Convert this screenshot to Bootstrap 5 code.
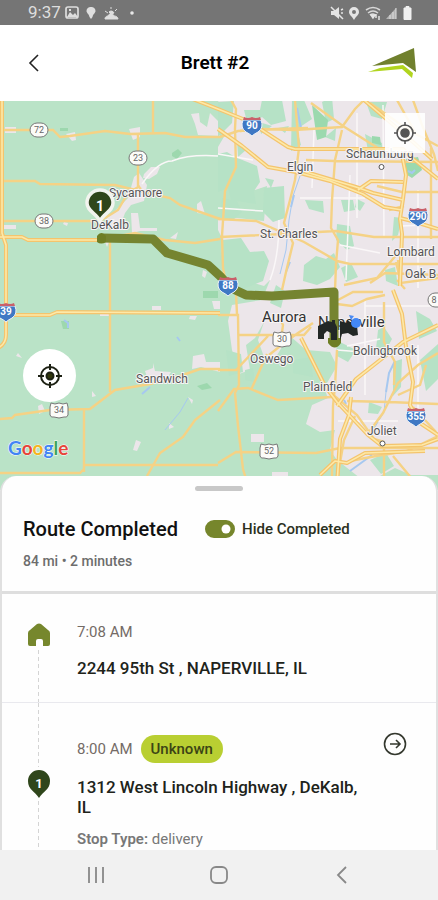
<!DOCTYPE html>
<html lang="en">
<head>
<meta charset="utf-8">
<meta name="viewport" content="width=device-width, initial-scale=1">
<title>Brett #2</title>
<link href="https://cdn.jsdelivr.net/npm/bootstrap@5.3.0/dist/css/bootstrap.min.css" rel="stylesheet">
<style>
  body { font-family: Roboto, "Liberation Sans", sans-serif; color: #111; background: #fdfdfd; }
  .screen { height: 100vh; min-height: 600px; }
  .status-bar { background: #757575; color: #dedede; height: 25px; font-size: 17px; line-height: 25px; }
  .top-bar { height: 76px; background: #fff; }
  .side-slot { width: 72px; }
  .side-slot.logo-slot { width: 80px; }
  .screen-title { font-size: 19px; line-height: 24px; font-weight: 600; color: #000; }
  .icon-btn { border: 0; background: none; padding: 0; display: flex; align-items: center; justify-content: center; }
  .map-area { height: 389px; background: #bae3c7; }
  .locate-square { position: absolute; top: 12px; right: 13px; width: 40px; height: 40px; background: #ffffffe6; }
  .locate-round { position: absolute; left: 23px; top: 248px; width: 53px; height: 53px; background: #fff; border-radius: 50%; }
  .sheet { margin-top: -14px; z-index: 2; background: #fefefe; border: 2px solid #e0e0e0; border-top: 0; border-bottom: 0; border-radius: 16px 16px 0 0; }
  .handle { width: 48px; height: 5px; border-radius: 3px; background: #c8c8c8; margin-top: 10px; }
  .sheet-head { padding: 22px 22px 20px 21px; border-bottom: 3px solid #dedede; }
  .route-title { font-size: 20px; line-height: 32px; font-weight: 500; width: 182px; }
  .route-meta { font-size: 14px; line-height: 20px; color: #6d6d6d; font-weight: 500; margin-top: 6px; }
  .hide-switch .form-check-input { width: 30px; height: 18px; margin: 0 7px 0 0; border: 3px solid #76862c; float: none; box-shadow: none; }
  .hide-switch .form-check-input:checked { background-color: #76862c; border-color: #76862c; }
  .hide-switch label { font-size: 15px; line-height: 20px; font-weight: 500; color: #2b301d; }
  .stop { border-bottom: 1px solid #e9e9ee; }
  .stop-rail { width: 75px; padding-left: 24px; background: linear-gradient(#d4d4d4 60%, transparent 0) 36px 0 / 1px 7px repeat-y; }
  .rail-mask { background: #fefefe; width: 26px; }
  .stop-time { font-size: 15px; line-height: 20px; color: #746b66; }
  .stop-address { font-size: 17px; line-height: 20px; font-weight: 500; color: #20231a; }
  .stop-details .stop-address { padding-top: 14px; padding-right: 12px; }
  .status-pill { background: #b9cf32; color: #3c4415; font-size: 15px; font-weight: 500; line-height: 20px; padding: 4px 10px; border-radius: 14px; }
  .stop-kind { font-size: 15px; line-height: 20px; color: #777; }
  .sys-nav { height: 50px; background: #f1f1f1; z-index: 3; padding: 0 72px; }
  .sys-nav button { width: 48px; height: 48px; }
  .map-label { font-size: 12px; fill: #555; stroke: #f7f4f5; stroke-width: 2px; paint-order: stroke; }
  .map-city { font-size: 15px; fill: #333; }
  .shield-text { font-size: 9px; text-anchor: middle; fill: #666; }
  .interstate-text { font-size: 10px; font-weight: 700; text-anchor: middle; fill: #fff; }
  .google-word { font-family: Lato, Roboto, sans-serif; font-size: 19px; font-weight: 700; stroke: #fff; stroke-width: 1px; paint-order: stroke; }
</style>
<script src="https://cdn.jsdelivr.net/npm/bootstrap@5.3.0/dist/js/bootstrap.bundle.min.js"></script>
</head>
<body>
<div class="screen d-flex flex-column overflow-hidden">
  <div class="status-bar d-flex align-items-center flex-shrink-0">
    <span class="ps-4 ms-1">9:37</span>
    <svg class="ms-1" width="75" height="18" viewBox="0 0 75 18" aria-hidden="true">
      <rect x="1" y="3" width="12" height="11" rx="2" fill="none" stroke="#dedede" stroke-width="1.7"/><path d="M2 13 5 8l3 3 2-2 3 4zM4 5h2v2H4z" fill="#dedede"/>
      <path d="M26 3a4 4 0 0 1 4.500 4c0 2-2.500 3-3 6l-1.500 2-1.500-2c-.5-3-3-4-3-6A4 4 0 0 1 26 3z" fill="#dedede"/>
      <path d="M40 15c0-3 3-3 3-3 1-3 5-3 6 0 4 0 4 3 4 3zM44 8a3 3 0 0 1 5 1l-3 1zM40 7l3 2M46 3v2M52 5l-2 2" fill="#dedede" stroke="#dedede"/>
      <circle cx="67" cy="9" r="1.800" fill="#e8e8e8"/>
    </svg>
    <svg class="ms-auto me-4" width="84" height="18" viewBox="0 0 84 18" aria-hidden="true">
      <path d="M1 7h3l5-4v12l-5-4H1z" fill="#e4e4e4"/><path d="M1 3l12 12M11 6l2-1M11 9h2" stroke="#e4e4e4" stroke-width="1.500"/>
      <path d="M24 3a5 5 0 0 1 5 5c0 3-3 4-5 8-2-4-5-5-5-8a5 5 0 0 1 5-5zm0 3a2 2 0 1 0 0 4 2 2 0 0 0 0-4z" fill="#e4e4e4" fill-rule="evenodd"/>
      <path d="M36 6q7-5 14 0M38 9q5-4 10 0M40 11q3-2 5 0" fill="none" stroke="#d8d8d8" stroke-width="1.600"/><path d="M43 14l-2-3h4zM46 10v4M49 12v4" stroke="#e4e4e4" stroke-width="1.500" fill="#e4e4e4"/>
      <path d="M56 15 66 4v11z" fill="#b4b4b4"/><path d="M60 15v-4M63 15V8M66 15V4" stroke="#ddd"/>
      <path d="M74 4h2V2.500h3V4h2v11.500h-7z" fill="#f0f0f0" stroke="#f0f0f0"/>
    </svg>
  </div>

  <header class="top-bar d-flex align-items-center justify-content-between flex-shrink-0 px-3">
    <div class="side-slot"><button class="icon-btn" type="button" aria-label="Back">
      <svg width="36" height="36" viewBox="0 0 36 36" fill="none" stroke="#222" stroke-width="1.600"><path d="M22 10l-8 8 8 8"/></svg>
    </button></div>
    <h1 class="screen-title m-0">Brett #2</h1>
    <div class="side-slot logo-slot d-flex justify-content-end">
      <svg width="58" height="38" viewBox="364 44 58 38" aria-hidden="true"><path d="M372 66 414 48l2 24-13-9z" fill="#70802d"/><path d="M367 72 378 67l25-3 13 9-3 6-12-10z" fill="#fff"/><path d="M368 72 380 68l23-3 10 8-1 5-10-9z" fill="#b1d51e"/></svg>
    </div>
  </header>

  <section class="map-area position-relative flex-shrink-0" aria-label="Route map">
    <svg class="d-block" width="100%" height="389" viewBox="0 101 438 389" preserveAspectRatio="xMidYMin slice">
      <defs>
        <g id="interstate"><path d="M-9-5q-3 8 3 12 4 2 6 4 2-2 6-4 6-4 3-12z" fill="#3f78c4" stroke="#edf2f8"/><path d="M-8-8q4 2 8 0 4 2 8 0l1 3h-18z" fill="#c9606a"/></g>
        <rect id="state" x="-9" y="-7" width="18" height="14" rx="7" fill="#fbfbf8" stroke="#777"/>
        <path id="us" d="M-8-7l4 1 4-1 4 1 4-1 1 4v8q-1 3-4 2l-5 1-5-1q-3 1-4-2v-8z" fill="#fbfbf8" stroke="#777"/>
      </defs>
      <rect y="100" width="438" height="390" fill="#bae3c7"/>
      <!-- built-up areas -->
      <g fill="#ece6ea">
        <path d="M218 100H438V475H432L411 475 395 468 380 476 360 478 337 460 330 450 335 430 320 432 306 424 312 405 328 398 324 388 337 366 330 352 306 350 289 335 276 357 264 357 258 340 264 322 255 338 246 345 250 370 239 374 232 350 228 321 232 305 262 300 270 280 264 286 244 280 221 253 223 240 218 230 218 219 237 218 264 221 267 186 255 190 239 186 218 188 218 147 225 135z"/>
        <path d="M191 114l8-1 1 9 7 5 3-14 8 8 2 15-22-1-3-11zM5 127h11v6H5zM66 134l9-2 1 8-4 1zM129 129l11-2v10l-7 3zM144 174l7-7h9l-3 7-8 5-6-1zM134 177l5-4 8 12-3 16-13 4-6 8-5 14-7 3-7-11 10-9 12-12zM4 225h12v4H4zM131 213h7l2 15h17v3h-17l-8 2zM64 222l4 1-1 3-4-2zM170 238l8-6-2 7zM197 204l4-3 4 13-8-1zM203 270l4 2-2 6-3-2zM105 242h4l-2 5zM18 353l4 5-6-2zM38 406l4-2 3 7-6 3zM92 391l4 5-4 1zM136 440l5 2-4 9-4-1zM153 363l2 8 16 1-5 8h-18l-3-9 8-3zM193 356l11-2 2 8h14v10l-19-5-9 2zM188 397l5 3-1 4zM169 423l5 4-5 2zM152 306h9v4h-9zM190 316h7l-2 4-6-1zM212 301h8v8h-6zM100 312h9v4h-9zM251 434h13v8h-13zM272 472h16v6h-16z"/>
      </g>
      <!-- parks and forest preserves -->
      <g fill="#b6e2c6">
        <path d="M218 154l9-2 8 5 22 9 3 16-6 9 2 13-25-4-3-12-10 4zM264 188l20-2 1 32-12 4-10-10zM222 198l15 3 5 11-9 8h-13zM223 240l18-2 9 14 14-1 5 10-6 20-20 8-17-8-6-22zM304 265l12-9 10 3 8-6 6 14-10 12-13 6-14-4zM322 102l10-5 2 22-8 4zM325 137l11-9-1 13zM292 100h12l8 19-15 10 4 16-10 6zM337 224l13 2 4 20-7 4-11-10zM366 102h21l-5 17-11-3zM365 134l17 9 2 16-16-8zM341 268l10-5 7 14-12 5zM385 270l10-3 3 19-12-5zM259 122l13 4-11 8zM265 178l9 2-3 8zM305 200l18 1 1 12-15-4zM341 200h12l2 10-11 2zM357 199l8 4-5 8-5-4zM394 217l8 1-4 17-6 6zM218 102l16-1-2 22-14 14zM237 140l9 10-8 7zM278 128l11-2-4 7zM244 110h16l2-10h20l4 21-15 4-9-8-14 9zM420 360l18-16v35l-12 12zM378 330l6-3 8 12-8 15-8-5zM393 362l9-3-1 28-8 9zM369 402l13 5-4 7-10-1zM416 311l14 8 7 12-18 8zM336 340l20 10-8 12-11-6zM276 285l9 6-4 17-11-5zM370 460l16-7 8 13-13 8z"/>
        <path d="M312 105l16 15-2 17-9 3zM406 159l12-2 4 13-10 8-8-5zM372 136l8 1 1 8-9-2z" fill="#9bd9ae"/>
        <path d="M172 153l6-4 4 4-5 6-5-3zM60 128h8v3h-8zM203 291h15v7h-15zM61 321h8v8h-6zM197 386l10-3 5 5-10 2z" fill="#9dd8ae"/>
        <path d="M226 350l15 4 2 18-14 4zM245 370l8-2 2 14-10-2zM293 360l18-3 2 20-20-4z"/>
      </g>
      <!-- water -->
      <g fill="none" stroke="#a6c8f0" stroke-width="2">
        <path d="M64 320l4 3v5M142 394l8-7M177 337l3 4M408 171l4 2 3-3M297 108l4 20M290 262l-4 10M294 195l-3 12M395 361l-6 12-3 19M344 400l2 4M372 455l-22 16"/>
        <path d="M300 176l-7 20-4 24-3 30-6 24M386 392l-2 20-12 20M165 430l15-18 8-14" stroke-width="1"/>
      </g>
      <!-- light local roads -->
      <g fill="none" stroke="#faf7f8" stroke-width="1.500">
        <path d="M142 184q16-23 30-23 18-7 46-5M218 154l35 6M357 113v105M383 105l1 132M270 280q9-23 9-60M300 198h65M365 306h73M337 350l37 3M365 300v95M418 345v80M314 130l-2 58M340 245l40 8M418 190v98M425 225l-24 1M350 175l-4 105M218 208l45 3M338 421h60M347 346l33-7"/>
      </g>
      <!-- arterials -->
      <g fill="none" stroke="#f5d285" stroke-width="2.400">
        <path d="M0 130h53l7 7 10-1 35-5 25 3 35-1 20 4h35l18-6 38-2 32-1M153 100v32M138 133v53l3 3M0 181h35l5 3 75 1 55 13 10 7 40 14M0 221h100l18-11 10-17 12-7M98 240l37-7 30 7 30 3 25-4M110 242v150M0 419l12-1 3-3 35-5 40-1 25-19 35-6 30-8 20-7h20M84 410v62M84 465h134M0 473h80l4-4M220 400l-25 20-12 17-23 16-13 23"/>
        <path d="M231 100l5 9-1 20 1 38-11 24-3 45 1 32 3 15M240 131l24-2 30 1 48-3 13-18 9-9M218 219l38 2 48 21 33 19 13 3h88M220 237l63-3 53-3 38 6h64M295 100l4 48-4 32-5 20-6 23 9 20-7 29-4 18M306 160l28 1 104 1M311 103l32 23 38 24M342 130l-7 30-3 40-1 28 7 12-2 24-1 27M413 100l9 25 12 29 4 17M438 146l-22-12-19-34M370 103l30 21 16 10M377 186l25 6h36M389 210l15-4M398 260l2 23M397 254l-20 24-33 7M431 148v91M401 237h37M338 300l15-8h30M337 304l15 2 15-7 18-4M396 262l5 21 37-5"/>
        <path d="M218 315h20l1 70-4 8 3 33 5 43 6 20M239 335h65l7-8M269 355l15-12 14-10 15-10M218 411l16-22 14-1 30 12 54-3M218 463l18-11 80 1 24-5h98M337 350l-2 36-2 20-1 70M331 393l26 22 17 24 10 3M355 416l-11 24-7 40M369 432l14-19 15-30 20-18 20-12M350 461l26-5 31-5 31-15M384 445v42M413 407l23 25M393 456l20 24M347 401l42 1 49 2M384 302v40l11 20-1 23M426 365l-6 20-22 10M397 280l8 9M278 315l5 10-2 15M218 284l18 8 1 23M370 283l15-10 53 2M218 370h18l32-34M251 390l16-36"/>
      </g>
      <!-- highways -->
      <g fill="none" stroke-linejoin="round" stroke="#f4c46d" stroke-width="4">
        <path d="M2 100v133l4 12v90q0 9-8 13M0 237h22l6 3h72M0 315h50l7-3 163 1M190 98l28 11 30 12 40 26 7 2h108l9 9 26 21"/>
        <path d="M218 129l24 17 26 21 28 5 34 9 33 13 21 13 18 3M306 172l50 15 17 6 30 7M358 190l13-9 32 1M402 155l4 20-3 24-3 20 2 15-2 52M364 100l40 34 28 25M400 218l12 3 26 8M393 290l9 24 4 33 7 35-3 23 10 18 18 12M438 325l-35 17-47 37-19 27M301 338l24 48 12 16 31 33 14 11 40-1 16-6M351 397l-2 18-9 24-3 45M320 475l15-14 12 2 18-10 60-2"/>
      </g>
      <g fill="none" stroke="#fde9a8" stroke-width="1.600">
        <path d="M2 100v133l4 12v90q0 9-8 13M0 237h22l6 3h72M0 315h50l7-3 163 1M190 98l28 11 30 12 40 26 7 2h108l9 9 26 21M218 129l24 17 26 21 28 5 34 9 33 13 21 13 18 3M306 172l50 15 17 6 30 7M358 190l13-9 32 1M402 155l4 20-3 24-3 20 2 15-2 52M364 100l40 34 28 25M400 218l12 3 26 8M393 290l9 24 4 33 7 35-3 23 10 18 18 12M438 325l-35 17-47 37-19 27M301 338l24 48 12 16 31 33 14 11 40-1 16-6M351 397l-2 18-9 24-3 45M320 475l15-14 12 2 18-10 60-2"/>
      </g>
      <!-- place names -->
      <g class="map-label">
        <text x="109" y="197">Sycamore</text><text x="91" y="229">DeKalb</text>
        <text x="287" y="171">Elgin</text><text x="346" y="158">Schaumburg</text>
        <text x="260" y="238">St. Charles</text><text x="387" y="256">Lombard</text><text x="405" y="278">Oak B</text>
        <text x="250" y="363">Oswego</text><text x="353" y="355">Bolingbrook</text><text x="303" y="391">Plainfield</text>
        <text x="367" y="435">Joliet</text><text x="136" y="383">Sandwich</text>
        <text class="map-city" x="262" y="322">Aurora</text><text class="map-city" x="318" y="327">Naperville</text>
      </g>
      <g fill="#fff" stroke="#555"><circle cx="381.500" cy="167" r="2.500"/><circle cx="382.500" cy="443.500" r="2.500"/></g>
      <!-- road shields -->
      <g class="shield-text">
        <use href="#state" x="39" y="130"/><text x="39" y="133">72</text>
        <use href="#state" x="138" y="158"/><text x="138" y="161">23</text>
        <use href="#state" x="44" y="221"/><text x="44" y="224">38</text>
        <use href="#state" x="437" y="300"/><text x="434" y="303">8</text>
        <use href="#us" x="59" y="410"/><text x="59" y="413">34</text>
        <use href="#us" x="282" y="339"/><text x="282" y="342">30</text>
        <use href="#us" x="269" y="451"/><text x="269" y="454">52</text>
      </g>
      <g class="interstate-text">
        <use href="#interstate" x="252" y="125"/><text x="252" y="129">90</text>
        <use href="#interstate" x="418" y="216"/><text x="418" y="220">290</text>
        <use href="#interstate" x="416" y="416"/><text x="416" y="420">355</text>
        <use href="#interstate" x="6" y="311"/><text x="6" y="315">39</text>
      </g>
      <!-- driven route -->
      <path d="M101 238l52 1 14 14 41 12 12 11 11 12 15 7 26 1 62-4v50" fill="none" stroke="#758430" stroke-width="9" stroke-linejoin="round"/>
      <path d="M97 236q4-6 9 0v6q-5 3-9 0zM328 338h13v5q-6 9-13 0z" fill="#6e7e25"/>
      <g class="interstate-text"><use href="#interstate" x="228" y="285"/><text x="228" y="289">88</text></g>
      <path d="M100 221C96 213 87 211 87 203a13 13 0 0 1 26 0c0 8-9 10-13 18z" fill="#2f461b" stroke="#f2f4ef" stroke-width="3.500"/>
      <text x="100" y="211" text-anchor="middle" font-size="14" font-weight="700" fill="#fff">1</text>
      <path d="M318 326l10-5 4 1v-2h3v3l2 4v13h-6v-7l-4-2-3 3v5h-6zM340 321l7 2v-3l10 6 1 9-5 1-5-3-6 1-2 7z" fill="#222725"/>
      <path d="M349 315l5 1-3 4z" fill="#4b8af3"/><circle cx="356" cy="323" r="5" fill="#4387f4"/>
      <text class="google-word" x="8" y="455"><tspan fill="#4285f4">G</tspan><tspan fill="#e6453a">o</tspan><tspan fill="#f4b51f">o</tspan><tspan fill="#4285f4">g</tspan><tspan fill="#3ba55d">l</tspan><tspan fill="#e6453a">e</tspan></text>
    </svg>
    <button class="icon-btn locate-square" type="button" aria-label="My location">
      <svg width="26" height="26" viewBox="0 0 26 26" fill="none" stroke="#555" stroke-width="1.600"><circle cx="13" cy="13" r="8"/><circle cx="13" cy="13" r="4" fill="#555"/><path d="M13 2v4M13 20v4M2 13h4M20 13h4"/></svg>
    </button>
    <button class="icon-btn locate-round" type="button" aria-label="Centre on route">
      <svg width="26" height="26" viewBox="0 0 26 26" fill="none" stroke="#1c2013" stroke-width="2"><circle cx="13" cy="13" r="9"/><circle cx="13" cy="13" r="3.500" fill="#30360b"/><path d="M13 1v6M13 19v6M1 13h6M19 13h6"/></svg>
    </button>
  </section>

  <main class="sheet position-relative d-flex flex-column flex-grow-1 overflow-hidden">
    <div class="handle mx-auto flex-shrink-0"></div>
    <div class="sheet-head flex-shrink-0">
      <div class="d-flex align-items-center">
        <h2 class="route-title m-0 text-nowrap">Route Completed</h2>
        <div class="hide-switch form-switch d-flex align-items-center p-0">
          <input class="form-check-input" type="checkbox" role="switch" id="hideDone" checked>
          <label for="hideDone">Hide Completed</label>
        </div>
      </div>
      <p class="route-meta mb-0">84 mi • 2 minutes</p>
    </div>
    <article class="stop d-flex flex-shrink-0">
      <div class="stop-rail flex-shrink-0"><div class="rail-mask pt-4">
        <svg class="d-block mt-1" width="26" height="26" viewBox="0 0 26 26" aria-hidden="true"><path d="M2 11q0-2 2-3l7-6q2-1 4 0l7 6q2 1 2 3v11q0 2-2 2h-5v-5q0-2-2-2h-3q-2 0-2 2v5H4q-2 0-2-2z" fill="#76872d"/></svg>
      </div></div>
      <div class="pt-4 pb-4">
        <div class="stop-time pt-1">7:08 AM</div>
        <div class="stop-address pt-3">2244 95th St , NAPERVILLE, IL</div>
      </div>
    </article>
    <article class="stop d-flex flex-shrink-0">
      <div class="stop-rail flex-shrink-0 d-flex align-items-start pt-5"><div class="rail-mask mt-3">
        <svg class="d-block" width="26" height="32" viewBox="0 0 26 32" aria-hidden="true"><path d="M13 31C9 24 2 23 2 14a11 11 0 0 1 22 0c0 9-7 10-11 17z" fill="#2f461b"/><text x="13" y="21" text-anchor="middle" font-size="13" font-weight="700" fill="#fff">1</text></svg>
      </div></div>
      <div class="stop-details flex-grow-1 pt-4 pb-4">
        <div class="d-flex align-items-center mt-2"><span class="stop-time">8:00 AM</span><span class="status-pill ms-2">Unknown</span></div>
        <div class="stop-address">1312 West Lincoln Highway , DeKalb, IL</div>
        <div class="stop-kind pt-2 mt-1"><span class="fw-semibold">Stop Type:</span> delivery</div>
      </div>
      <div class="flex-shrink-0 pt-4 pe-4 ps-2"><button class="icon-btn mt-1 me-1" type="button" aria-label="Open stop">
        <svg width="26" height="26" viewBox="0 0 26 26" fill="none" stroke="#34382e" stroke-width="1.600"><circle cx="13" cy="13" r="10.500"/><path d="M8 13h9M14 9l4 4-4 4"/></svg>
      </button></div>
    </article>
  </main>

  <nav class="sys-nav d-flex align-items-center justify-content-between flex-shrink-0" aria-label="System">
    <button class="icon-btn" type="button" aria-label="Recent apps"><svg width="20" height="20" viewBox="0 0 20 20" stroke="#888" stroke-width="1.800"><path d="M3 2v16M10 2v16M17 2v16"/></svg></button>
    <button class="icon-btn" type="button" aria-label="Home"><svg width="20" height="20" viewBox="0 0 20 20" fill="none" stroke="#888" stroke-width="1.800"><rect x="2" y="2" width="16" height="16" rx="5"/></svg></button>
    <button class="icon-btn" type="button" aria-label="Back"><svg width="20" height="20" viewBox="0 0 20 20" fill="none" stroke="#888" stroke-width="1.800"><path d="M14 2 6 10l8 8"/></svg></button>
  </nav>
</div>
</body>
</html>
